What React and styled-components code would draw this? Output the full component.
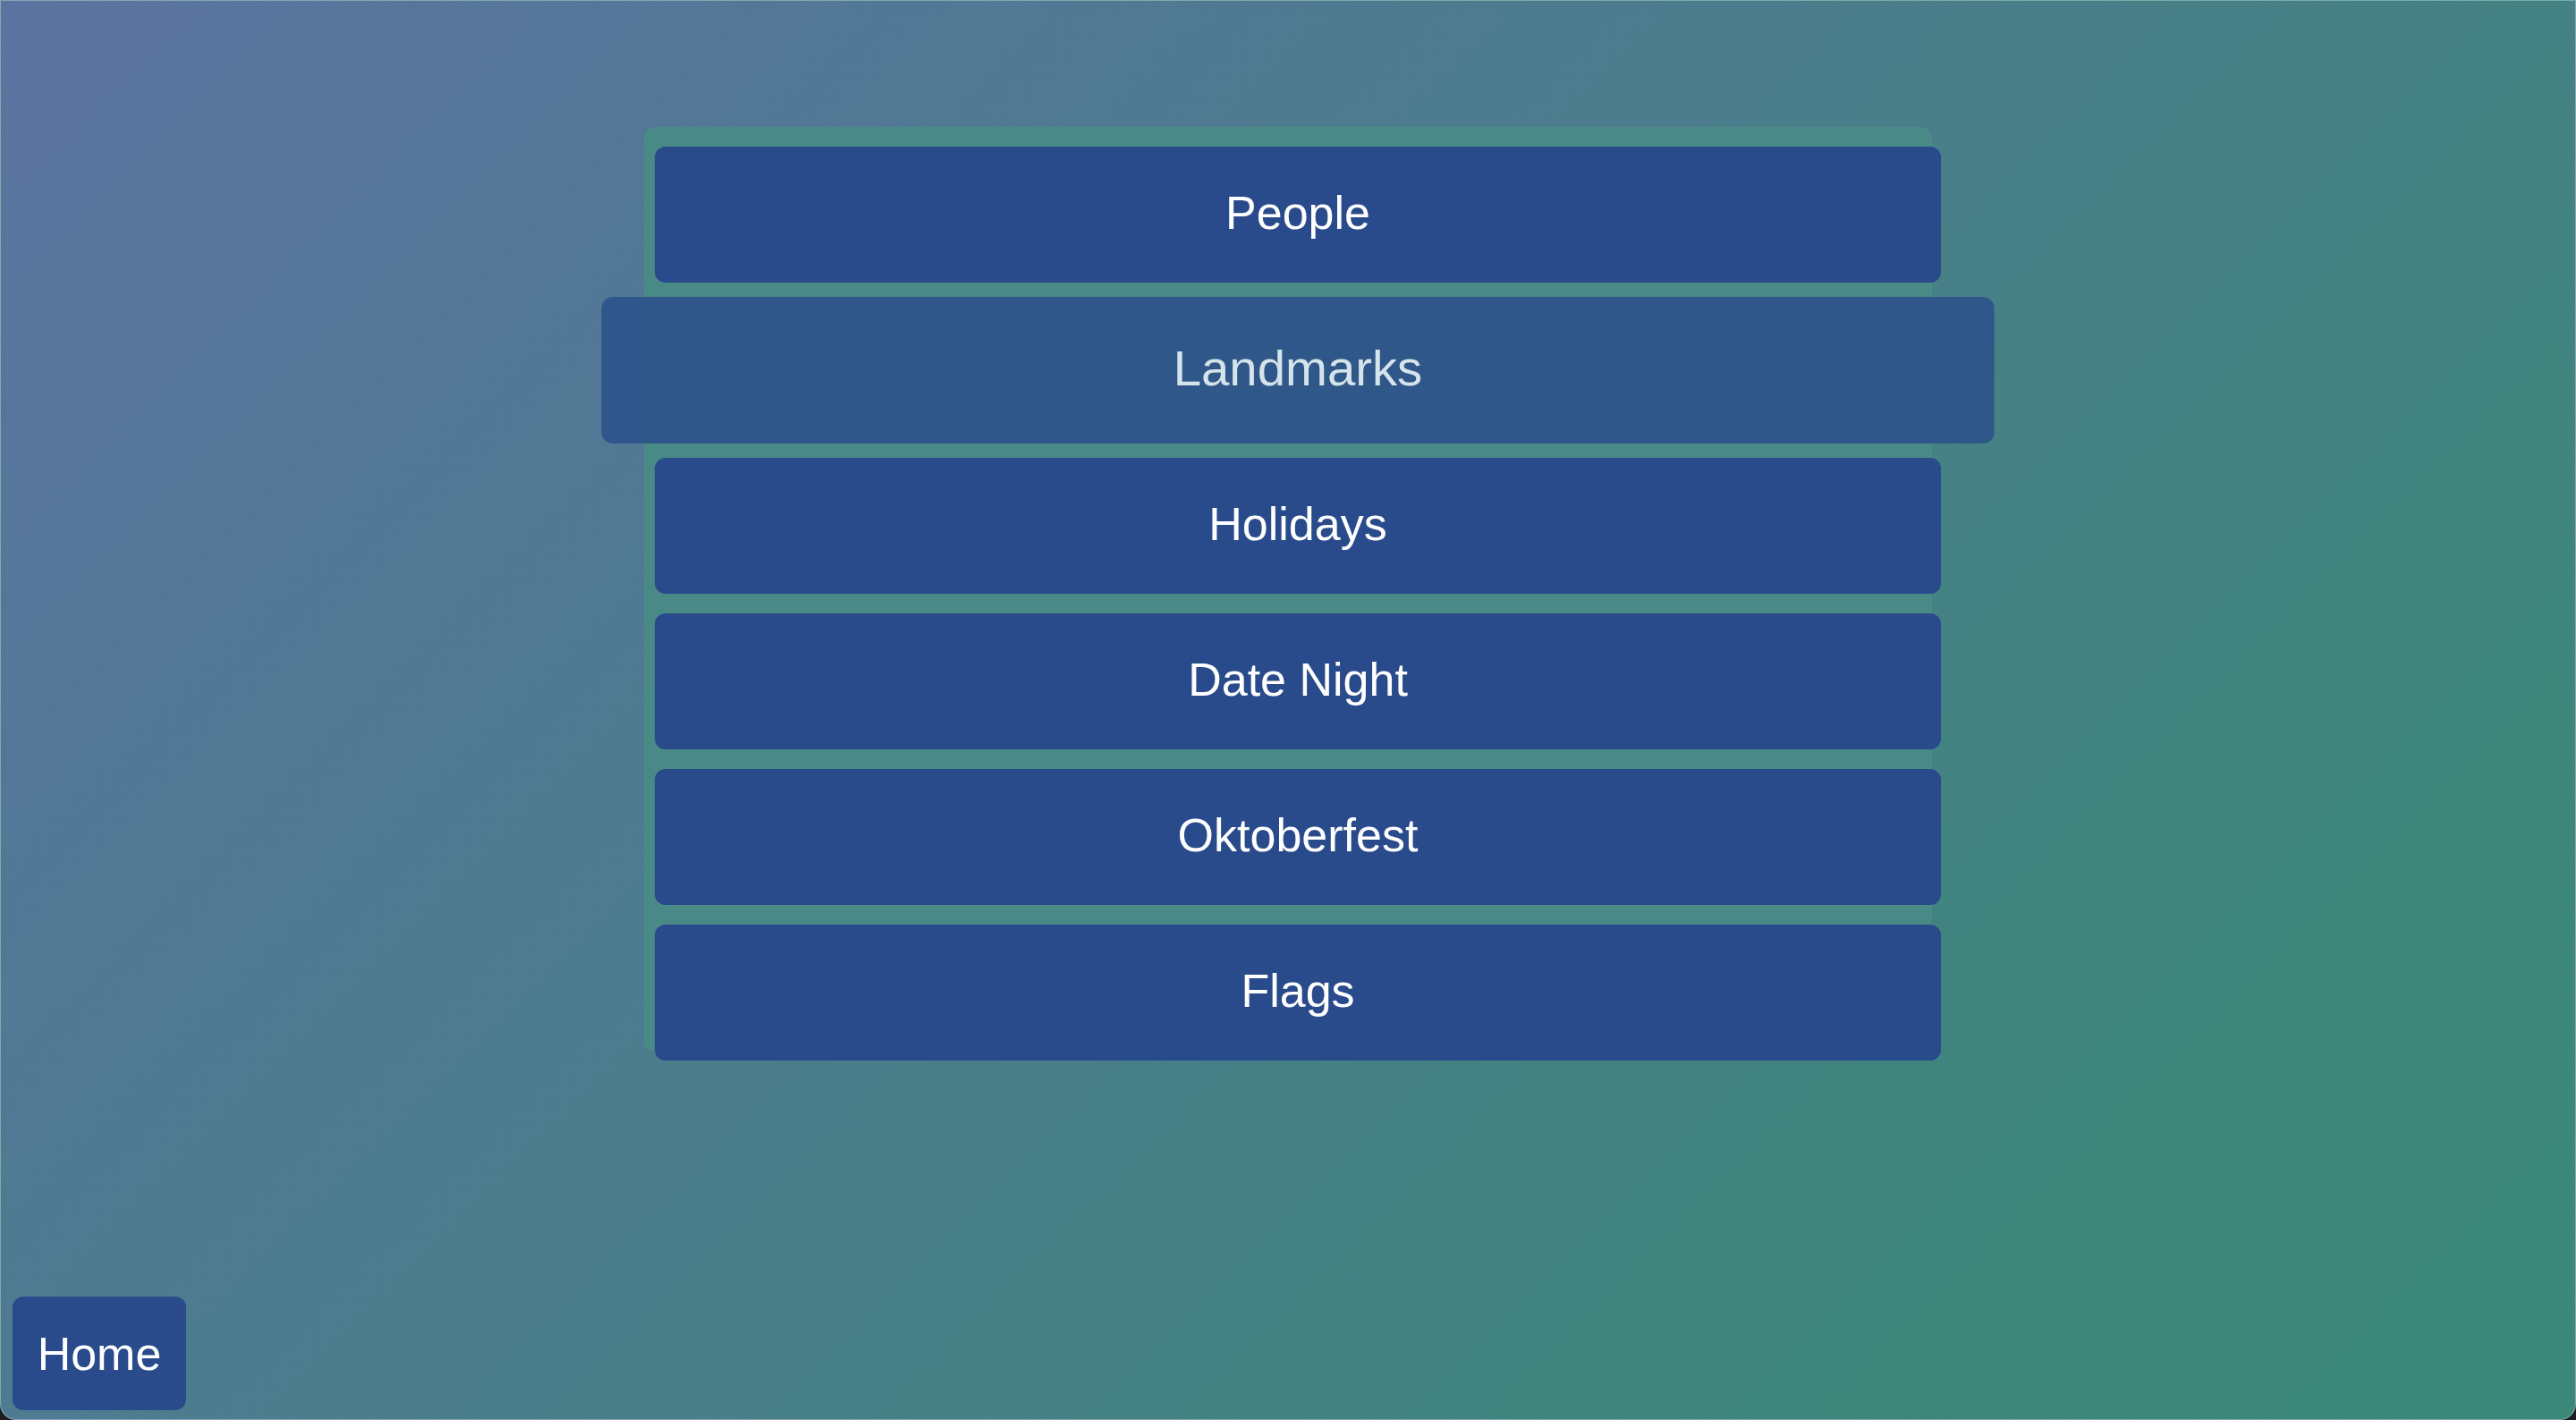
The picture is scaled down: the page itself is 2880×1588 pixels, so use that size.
import React from 'react';
import styled, {createGlobalStyle} from 'styled-components';

const GlobalStyle = createGlobalStyle`
html, body {
  margin: 0;
  padding: 0;
  background: #1c1c1e;
}
* {
  box-sizing: border-box;
}
`;

const Page = styled.div`
display: flex;
flex-direction: column;
align-items: center;
width: 100%;
height: 100vh;
padding: 141px 0 10px 13px;
background: linear-gradient(135deg, #5b73a0 0%, #4b7d8c 45%, #3c8779 85%, #3b8878 100%);
border: 1px solid rgba(200, 220, 230, 0.45);
border-radius: 0 0 18px 18px;
font-family: "Liberation Sans", Arial, Helvetica, sans-serif;
overflow: hidden;
`;

const CategoryList = styled.div`
display: flex;
flex-direction: column;
gap: 22px;
width: 1440px;
margin-left: -13px;
padding-top: 12px;
background: #4a8a86;
border-radius: 12px;
`;

const CategoryButton = styled.button`
display: flex;
align-items: center;
justify-content: center;
width: 1438px;
height: 152px;
padding: 0 0 4px;
border: none;
border-radius: 12px;
font-family: inherit;
font-size: 52px;
cursor: pointer;
color: ${props => props.$hovered ? '#dae6ee' : '#ffffff'};
background: ${props => props.$hovered ? '#30568a' : '#294a8b'};
opacity: ${props => props.$hovered ? 0.97 : 1};
transform: translate(12px, 10px) ${props => props.$hovered ? 'scale(1.083, 1.079)' : ''};
`;

const Footer = styled.div`
display: flex;
align-self: stretch;
margin-top: auto;
`;

const HomeButton = styled.button`
display: flex;
align-items: center;
justify-content: center;
width: 194px;
height: 127px;
padding: 0;
border: none;
border-radius: 12px;
background: #294a8b;
color: #ffffff;
font-family: inherit;
font-size: 52px;
cursor: pointer;
`;

const categories = ['People', 'Landmarks', 'Holidays', 'Date Night', 'Oktoberfest', 'Flags'];

export default function App() {
    return (
        <Page>
            <GlobalStyle/>
            <CategoryList>
                {categories.map(name => (
                    <CategoryButton key={name} $hovered={name === 'Landmarks'}>{name}</CategoryButton>
                ))}
            </CategoryList>
            <Footer>
                <HomeButton>Home</HomeButton>
            </Footer>
        </Page>
    );
}
